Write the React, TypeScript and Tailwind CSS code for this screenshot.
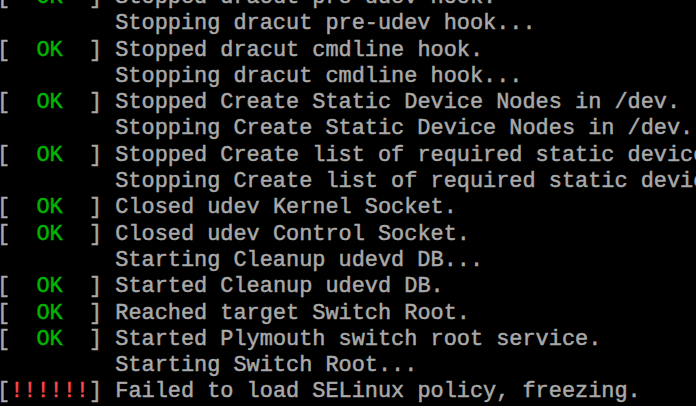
import React from "react";

type Line = { tag?: "ok" | "fail"; text: string };

const lines: Line[] = [
  { tag: "ok", text: "Stopped dracut pre-udev hook." },
  { text: "Stopping dracut pre-udev hook..." },
  { tag: "ok", text: "Stopped dracut cmdline hook." },
  { text: "Stopping dracut cmdline hook..." },
  { tag: "ok", text: "Stopped Create Static Device Nodes in /dev." },
  { text: "Stopping Create Static Device Nodes in /dev." },
  { tag: "ok", text: "Stopped Create list of required static device nodes for the current kernel." },
  { text: "Stopping Create list of required static device nodes for the current kernel..." },
  { tag: "ok", text: "Closed udev Kernel Socket." },
  { tag: "ok", text: "Closed udev Control Socket." },
  { text: "Starting Cleanup udevd DB..." },
  { tag: "ok", text: "Started Cleanup udevd DB." },
  { tag: "ok", text: "Reached target Switch Root." },
  { tag: "ok", text: "Started Plymouth switch root service." },
  { text: "Starting Switch Root..." },
  { tag: "fail", text: "Failed to load SELinux policy, freezing." },
];

export default function App() {
  return (
    <div className="w-[696px] h-[406px] bg-black overflow-hidden">
      <div
        className="-mt-[15px] -ml-[3px] text-[21.9px] leading-[26.3px] text-[#a9a9a9] whitespace-pre [-webkit-text-stroke-width:0.5px]"
        style={{ fontFamily: '"Liberation Mono", "DejaVu Sans Mono", monospace' }}
      >
        {lines.map((l, i) => (
          <div key={i} className="h-[26.3px]">
            {l.tag === "ok" && (
              <>
                <span>{"[  "}</span>
                <span className="text-[#00b400]">OK</span>
                <span>{"  ] "}</span>
              </>
            )}
            {l.tag === "fail" && (
              <>
                <span>[</span>
                <span className="text-[#ff4848]">!!!!!!</span>
                <span>{"] "}</span>
              </>
            )}
            {!l.tag && <span>{"         "}</span>}
            <span>{l.text}</span>
          </div>
        ))}
      </div>
    </div>
  );
}
